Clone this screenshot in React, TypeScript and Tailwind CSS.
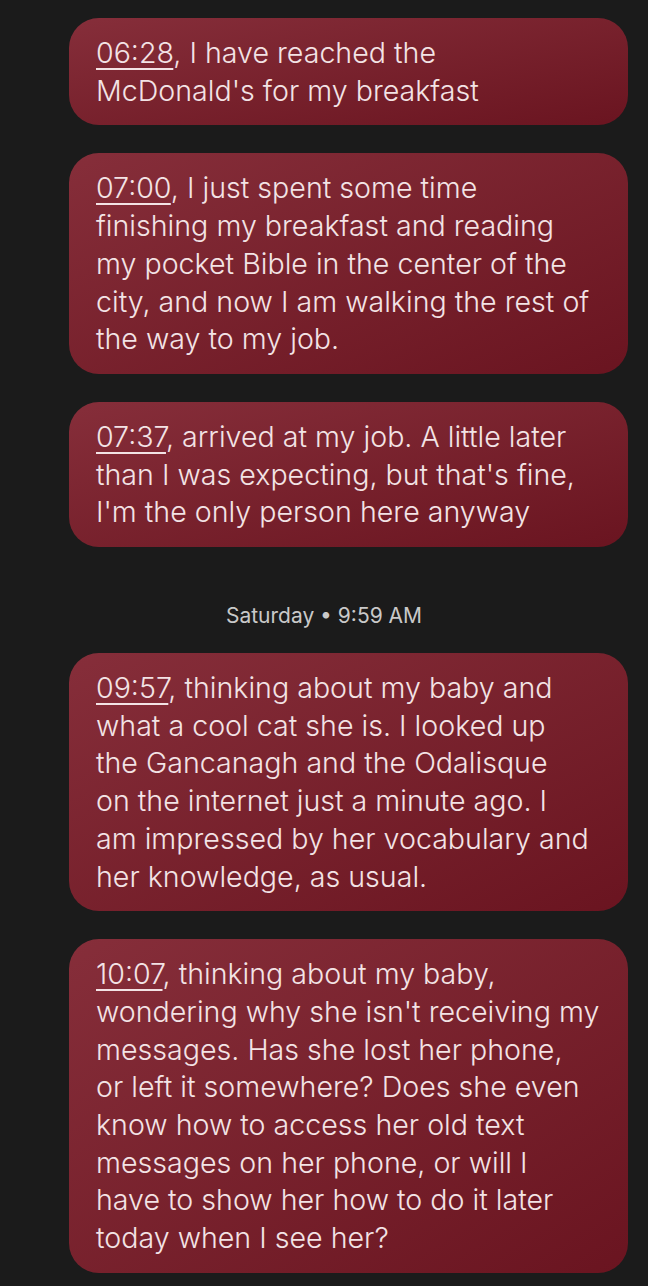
import React from 'react';

interface Message {
  time: string;
  lines: string[];
}

const EARLY: Message[] = [
  { time: '06:28', lines: [', I have reached the', "McDonald's for my breakfast"] },
  {
    time: '07:00',
    lines: [
      ', I just spent some time',
      'finishing my breakfast and reading',
      'my pocket Bible in the center of the',
      'city, and now I am walking the rest of',
      'the way to my job.',
    ],
  },
  {
    time: '07:37',
    lines: [
      ', arrived at my job. A little later',
      "than I was expecting, but that's fine,",
      "I'm the only person here anyway",
    ],
  },
];

const LATER: Message[] = [
  {
    time: '09:57',
    lines: [
      ', thinking about my baby and',
      'what a cool cat she is. I looked up',
      'the Gancanagh and the Odalisque',
      'on the internet just a minute ago. I',
      'am impressed by her vocabulary and',
      'her knowledge, as usual.',
    ],
  },
  {
    time: '10:07',
    lines: [
      ', thinking about my baby,',
      "wondering why she isn't receiving my",
      'messages. Has she lost her phone,',
      'or left it somewhere? Does she even',
      'know how to access her old text',
      'messages on her phone, or will I',
      'have to show her how to do it later',
      'today when I see her?',
    ],
  },
];

const Bubble: React.FC<{ msg: Message }> = ({ msg }) => (
  <div className="ml-[69px] w-[559px] rounded-[30px] bg-gradient-to-br from-[#862e3a] to-[#6a1420] px-[27px] py-[16px] text-[28.6px] font-light leading-[37.7px] text-[#f3e3e5]">
    {msg.lines.map((line, i) => (
      <div key={i} className="whitespace-nowrap">
        {i === 0 && (
          <span className="underline decoration-2 underline-offset-[5px]">{msg.time}</span>
        )}
        {line}
      </div>
    ))}
  </div>
);

export default function App() {
  return (
    <div
      className="min-h-[1286px] w-[648px] overflow-hidden bg-[#1b1b1b] pt-[18px]"
      style={{ fontFamily: 'Inter, "Noto Sans", sans-serif' }}
    >
      <div className="flex flex-col gap-[28px]">
        {EARLY.map((m) => (
          <Bubble key={m.time} msg={m} />
        ))}
      </div>

      <div className="mt-[55px] mb-[23px] text-center text-[21px] leading-[28px] text-[#c9c9c9]">
        Saturday • 9:59 AM
      </div>

      <div className="flex flex-col gap-[28px]">
        {LATER.map((m) => (
          <Bubble key={m.time} msg={m} />
        ))}
      </div>
    </div>
  );
}
